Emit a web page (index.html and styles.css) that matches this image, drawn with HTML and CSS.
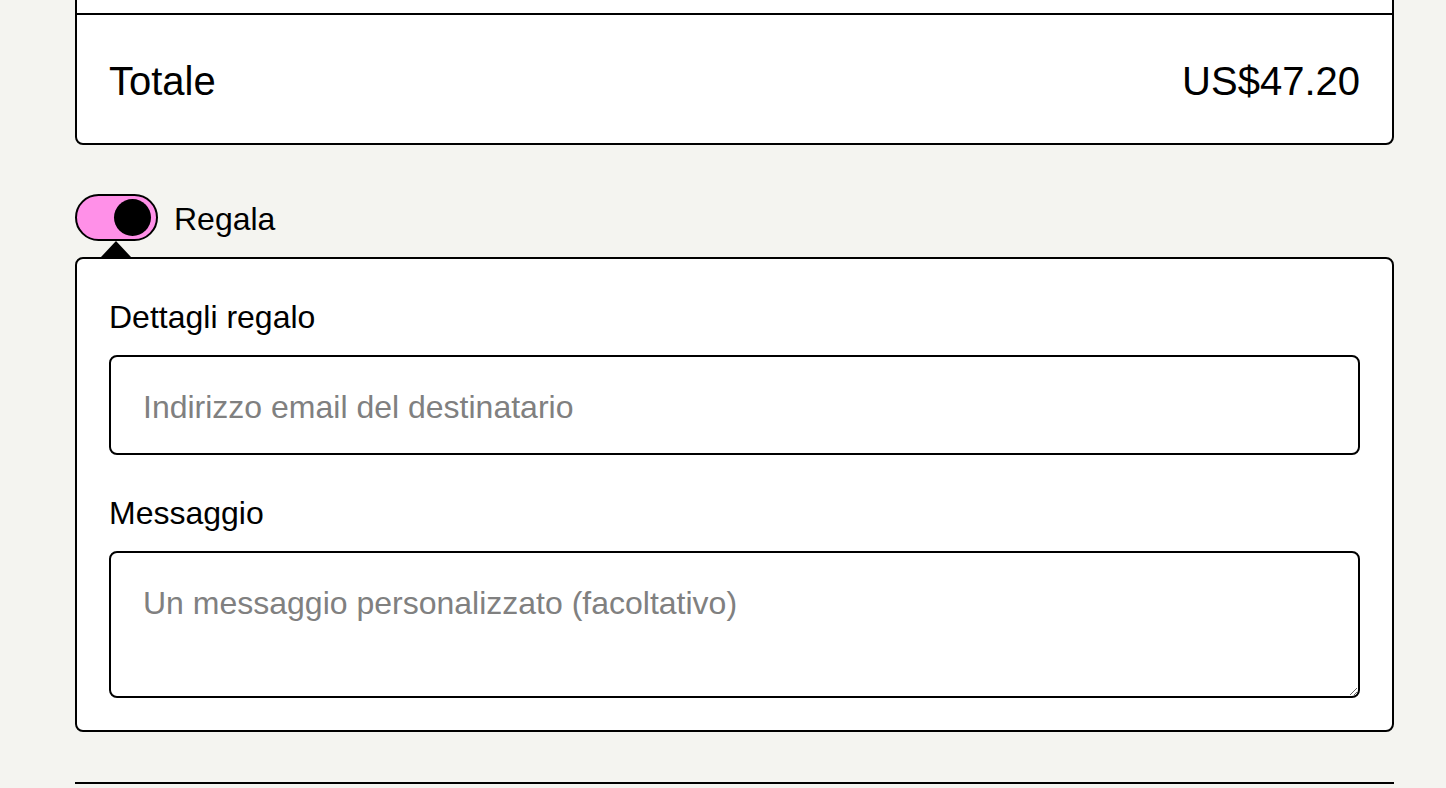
FILE: index.html
```html
<!DOCTYPE html>
<html lang="it">
  <head>
    <meta charset="UTF-8" />
    <meta name="viewport" content="width=device-width, initial-scale=1.0" />
    <title>Checkout - Regala</title>
    <link rel="stylesheet" href="styles.css">
  </head>
  <body>
    <div class="page">
      <div class="summary">
        <div class="summary-row summary-items"></div>
        <div class="summary-row total">
          <span>Totale</span>
          <span>US$47.20</span>
        </div>
      </div>

      <label class="gift-toggle">
        <span class="switch"><span class="knob"></span></span>
        <span class="toggle-text">Regala</span>
      </label>

      <div class="gift-card">
        <div class="field">
          <label for="gift_email">Dettagli regalo</label>
          <input id="gift_email" type="email" placeholder="Indirizzo email del destinatario" />
        </div>
        <div class="field">
          <label for="gift_note">Messaggio</label>
          <textarea id="gift_note" placeholder="Un messaggio personalizzato (facoltativo)"></textarea>
        </div>
      </div>

      <div class="next-section"></div>
    </div>
  </body>
</html>
```

FILE: styles.css
```css
body {
  margin: 0;
  background-color: #f4f4f0;
  color: #000;
  font-family: "Liberation Sans", Arial, sans-serif;
  font-size: 32px;
  line-height: 48px;
  overflow: hidden;
}
.page {
  padding: 0 52px 0 75px;
}
.summary {
  margin-top: -50px;
  background-color: #fff;
  border: 2px solid #000;
  border-radius: 8px;
}
.summary-items {
  height: 61px;
}
.summary-row + .summary-row {
  border-top: 2px solid #000;
}
.total {
  display: flex;
  justify-content: space-between;
  padding: 34px 32px 30px;
  font-size: 40px;
  line-height: 64px;
}
.gift-toggle {
  display: flex;
  align-items: center;
  gap: 16px;
  margin-top: 48px;
  cursor: pointer;
}
.toggle-text {
  padding-top: 4px;
  line-height: 44px;
}
.switch {
  box-sizing: border-box;
  display: flex;
  align-items: center;
  justify-content: flex-end;
  width: 83px;
  height: 47px;
  padding: 0 5px;
  background-color: #ff90e8;
  border: 2px solid #000;
  border-radius: 999px;
}
.knob {
  width: 37px;
  height: 37px;
  background-color: #000;
  border-radius: 50%;
}
.gift-card {
  position: relative;
  display: flex;
  flex-direction: column;
  gap: 32px;
  margin-top: 16px;
  padding: 32px;
  background-color: #fff;
  border: 2px solid #000;
  border-radius: 8px;
}
.gift-card::before {
  content: "";
  position: absolute;
  top: -18px;
  left: 24px;
  width: 0;
  height: 0;
  border-left: 15px solid transparent;
  border-right: 15px solid transparent;
  border-bottom: 16px solid #000;
}
.field {
  display: flex;
  flex-direction: column;
  gap: 16px;
}
.field label {
  padding-top: 4px;
  line-height: 44px;
}
input,
textarea {
  box-sizing: border-box;
  width: 100%;
  margin: 0;
  padding: 26px 32px 22px;
  font-family: inherit;
  font-size: 32px;
  line-height: 48px;
  color: #000;
  background-color: #fff;
  border: 2px solid #000;
  border-radius: 8px;
  outline: none;
}
input {
  height: 100px;
}
textarea {
  height: 147px;
  resize: vertical;
}
input::placeholder,
textarea::placeholder {
  color: #808080;
}
.next-section {
  margin-top: 50px;
  height: 40px;
  border-top: 2px solid #000;
}
```
